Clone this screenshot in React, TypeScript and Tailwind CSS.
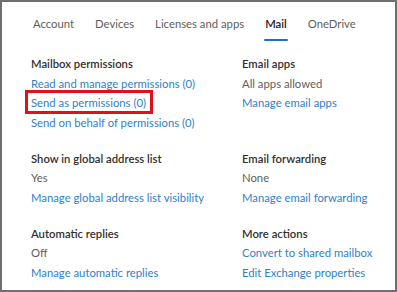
import React from "react";

const Link = ({ children }: { children: React.ReactNode }) => (
  <div className="text-[#2f7fc8]">{children}</div>
);
const Head = ({ children }: { children: React.ReactNode }) => (
  <div className="font-semibold text-[#323130]">{children}</div>
);
const Val = ({ children }: { children: React.ReactNode }) => (
  <div className="text-[#605e5c]">{children}</div>
);

export default function App() {
  return (
    <div
      className="w-[397px] h-[292px] bg-white border-2 border-[#6f6f6f] overflow-hidden"
      style={{ fontFamily: 'Lato, "Open Sans", sans-serif' }}
    >
      <div className="flex gap-[21px] pl-[31px] pt-[14px] text-[11.3px] text-[#605e5c]">
        <div className="h-[24px] leading-[16px]">Account</div>
        <div className="h-[24px] leading-[16px]">Devices</div>
        <div className="h-[24px] leading-[16px]">Licenses and apps</div>
        <div className="h-[24px] leading-[16px] font-semibold text-[#252423] relative">
          Mail
          <div className="absolute left-[-1px] right-[-1px] bottom-[-1px] h-[2px] bg-[#1f6fc5] rounded-full" />
        </div>
        <div className="h-[24px] leading-[16px]">OneDrive</div>
      </div>
      <div className="grid grid-cols-[211px_1fr] gap-y-[16.5px] pl-[29px] pt-[14px] text-[11.3px] leading-[19.5px]">
        <div>
          <Head>Mailbox permissions</Head>
          <Link>Read and manage permissions (0)</Link>
          <div className="relative">
            <Link>Send as permissions (0)</Link>
            <div className="absolute left-[-6px] top-[-3px] w-[128px] h-[24px] border-[3px] border-[#e0101c]" />
          </div>
          <Link>Send on behalf of permissions (0)</Link>
        </div>
        <div>
          <Head>Email apps</Head>
          <Val>All apps allowed</Val>
          <Link>Manage email apps</Link>
        </div>
        <div>
          <Head>Show in global address list</Head>
          <Val>Yes</Val>
          <Link>Manage global address list visibility</Link>
        </div>
        <div>
          <Head>Email forwarding</Head>
          <Val>None</Val>
          <Link>Manage email forwarding</Link>
        </div>
        <div>
          <Head>Automatic replies</Head>
          <Val>Off</Val>
          <Link>Manage automatic replies</Link>
        </div>
        <div>
          <Head>More actions</Head>
          <Link>Convert to shared mailbox</Link>
          <Link>Edit Exchange properties</Link>
        </div>
      </div>
    </div>
  );
}
